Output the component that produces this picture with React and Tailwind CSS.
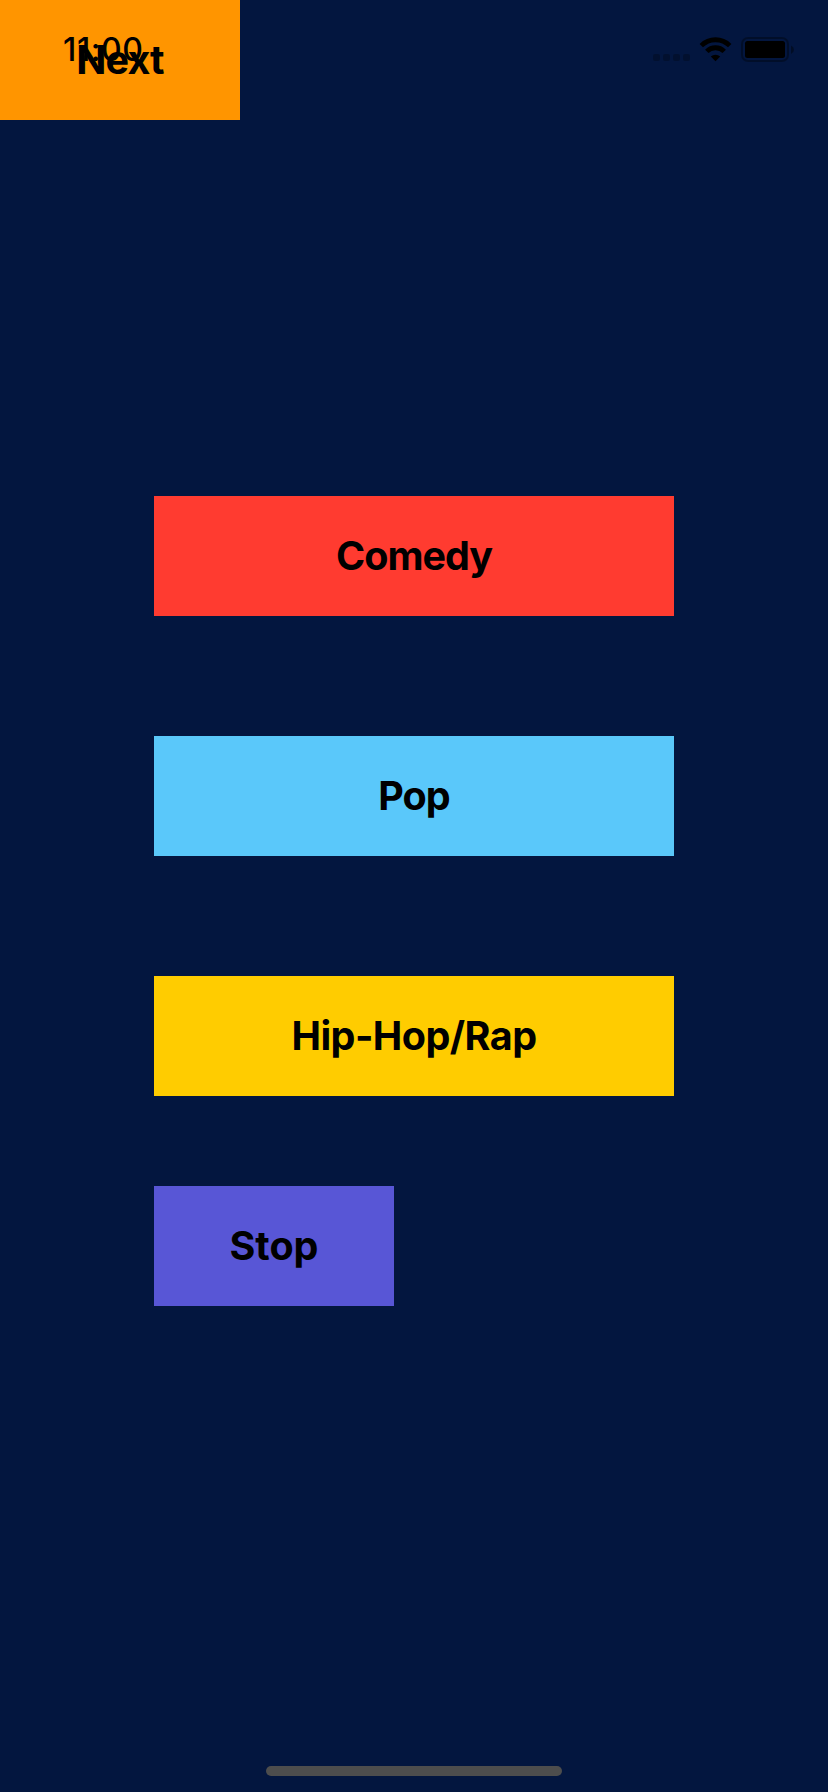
const genres = [
  { label: "Comedy", color: "bg-[#ff3b30]", spacing: "tracking-[-1px]" },
  { label: "Pop", color: "bg-[#5ac8fa]", spacing: "tracking-[-1px]" },
  { label: "Hip-Hop/Rap", color: "bg-[#ffcc00]", spacing: "tracking-[-0.55px]" },
];

function BlockButton({ label, className }) {
  return (
    <button
      className={`flex h-[120px] items-center justify-center text-[39.5px] leading-[48px] font-bold text-black ${className}`}
    >
      {label}
    </button>
  );
}

function StatusBar() {
  return (
    <div className="pointer-events-none absolute inset-x-0 top-0 h-[88px]">
      <span className="absolute top-[30px] left-[63px] text-[32px] leading-[40px] font-medium tracking-[0.6px] text-black">
        11:00
      </span>
      <svg className="absolute top-[30px] left-[648px]" width="152" height="40" viewBox="648 30 152 40">
        <g fill="#000" fillOpacity="0.25">
          <rect x="653" y="54" width="7" height="7" rx="2" />
          <rect x="663" y="54" width="7" height="7" rx="2" />
          <rect x="673" y="54" width="7" height="7" rx="2" />
          <rect x="683" y="54" width="7" height="7" rx="2" />
        </g>
        <g fill="none" stroke="#000" strokeWidth="4.8">
          <path d="M701.3 45.6 A20.2 20.2 0 0 1 729.7 45.6" />
          <path d="M706.8 51.4 A12.2 12.2 0 0 1 724.2 51.4" />
        </g>
        <path d="M715.5 61.3 L710.8 56.6 A6.8 6.8 0 0 1 720.2 56.6 Z" fill="#000" />
        <rect x="742" y="38" width="46" height="23" rx="6" fill="none" stroke="#000" strokeOpacity="0.35" strokeWidth="2" />
        <rect x="745" y="41" width="40" height="17" rx="2.5" fill="#000" />
        <path d="M791 45.5 Q794 47 794 49.7 Q794 52.4 791 54 Z" fill="#000" fillOpacity="0.4" />
      </svg>
    </div>
  );
}

export default function App() {
  return (
    <main className="relative flex h-[1792px] w-[828px] flex-col overflow-hidden bg-[#03163f] font-['Inter',sans-serif]">
      <BlockButton label="Next" className="w-[240px] bg-[#ff9500] tracking-[-0.8px]" />
      <div className="mt-[376px] ml-[154px] flex w-[520px] flex-col gap-[120px]">
        {genres.map((g) => (
          <BlockButton key={g.label} label={g.label} className={`${g.color} ${g.spacing}`} />
        ))}
      </div>
      <BlockButton label="Stop" className="mt-[90px] ml-[154px] w-[240px] bg-[#5856d6] tracking-[0px]" />
      <div className="mx-auto mt-auto mb-[16px] h-[10px] w-[296px] rounded-full bg-[#4d4d4d]" />
      <StatusBar />
    </main>
  );
}
